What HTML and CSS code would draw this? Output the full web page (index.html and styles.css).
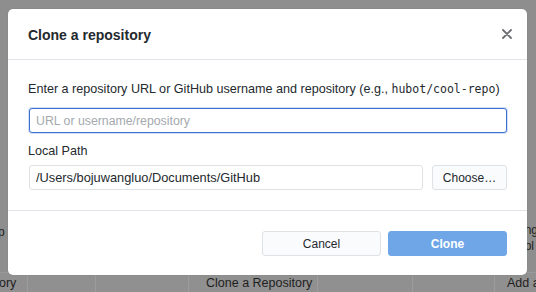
FILE: index.html
```
<!DOCTYPE html>
<html>
<head>
<meta charset="utf-8">
<link rel="stylesheet" href="styles.css">
</head>
<body>
<div class="app">
  <div class="bg-top"></div>
  <div class="bg-mid">
    <span class="bg-left">p</span>
    <span class="bg-right">ng<br>pl</span>
  </div>
  <div class="bg-bar">
    <div class="cell c1">ory</div>
    <div class="cell c2"></div>
    <div class="cell c3"></div>
    <div class="cell c4">Clone a Repository</div>
    <div class="cell c5"></div>
    <div class="cell c6"></div>
    <div class="cell c7">Add a</div>
  </div>
</div>
<div class="dialog">
  <div class="header">
    <h1 class="title">Clone a repository</h1>
    <svg class="close" width="10" height="10" viewBox="0 0 10 10"><path d="M1 1L9 9M9 1L1 9" stroke="#6a6d71" stroke-width="1.8" stroke-linecap="round"/></svg>
  </div>
  <div class="body">
    <p class="label">Enter a repository URL or GitHub username and repository (e.g., <code>hubot/cool-repo</code>)</p>
    <input class="field focus" type="text" placeholder="URL or username/repository">
    <p class="label small-gap">Local Path</p>
    <div class="row">
      <input class="field path" type="text" value="/Users/bojuwangluo/Documents/GitHub">
      <button class="btn choose">Choose…</button>
    </div>
  </div>
  <div class="footer">
    <button class="btn cancel">Cancel</button>
    <button class="btn primary">Clone</button>
  </div>
</div>
</body>
</html>
```
FILE: styles.css
```
html, body {
  margin: 0;
  padding: 0;
}
body {
  width: 536px;
  height: 292px;
  overflow: hidden;
  background: #8e8e8e;
  font-family: "Liberation Sans", Arial, sans-serif;
  position: relative;
}
.app {
  height: 292px;
  display: flex;
  flex-direction: column;
}
.bg-top {
  height: 222px;
}
.bg-mid {
  height: 50px;
  display: flex;
  justify-content: space-between;
  color: #222;
  font-size: 12px;
}
.bg-left {
  margin-left: -2px;
  padding-top: 3px;
}
.bg-right {
  margin-right: -2px;
  line-height: 16px;
  padding-top: 0;
}
.bg-bar {
  flex: 1;
  display: flex;
  background: #909090;
  border-top: 1px solid #999;
}
.cell {
  border-right: 1px solid #9c9c9c;
  color: #1e1e1e;
  font-size: 12.5px;
  padding-top: 3px;
  white-space: nowrap;
  overflow: hidden;
}
.c1 { width: 27px; text-indent: -1px; }
.c2 { width: 67px; }
.c3 { width: 92px; }
.c4 { width: 128px; text-indent: 17px; }
.c5 { width: 94px; }
.c6 { width: 81px; }
.c7 { flex: 1; border-right: none; text-indent: 12px; }

.dialog {
  position: absolute;
  left: 8px;
  top: 9px;
  width: 519px;
  height: 266px;
  background: #fff;
  border-radius: 5px;
  box-shadow: 0 0 1px rgba(0,0,0,0.3);
  display: flex;
  flex-direction: column;
  color: #24292e;
}
.header {
  height: 50px;
  display: flex;
  align-items: center;
  justify-content: space-between;
  padding: 0 15px 0 20px;
  border-bottom: 1px solid #e1e4e8;
}
.title {
  margin: 0;
  font-size: 14px;
  font-weight: bold;
  padding-top: 2px;
}
.close {
  display: block;
}
.body {
  padding: 21px 20px 0 20px;
  height: 129px;
  border-bottom: 1px solid #e1e4e8;
}
.label {
  margin: 0 0 11px 0;
  font-size: 12.6px;
  line-height: 16px;
}
.small-gap {
  margin-top: 10px;
  margin-bottom: 6px;
}
code {
  font-family: "DejaVu Sans Mono", monospace;
  font-size: 11.5px;
}
.field {
  box-sizing: border-box;
  display: block;
  width: 478px;
  height: 25px;
  margin: 0 0 0 1px;
  border: 1px solid #dfe2e5;
  border-radius: 3px;
  padding: 0 6px;
  font-family: "Liberation Sans", Arial, sans-serif;
  font-size: 12.8px;
  color: #24292e;
  background: #fff;
  outline: none;
}
.field::placeholder {
  color: #a5a9ae;
  font-size: 12.3px;
}
.focus {
  border: 1px solid #3a6fd3;
  box-shadow: 0 0 0 1px rgba(80,130,220,0.25);
}
.row {
  display: flex;
  gap: 9px;
}
.path {
  width: 394px;
}
.btn {
  box-sizing: border-box;
  height: 25px;
  border: 1px solid #dfe2e5;
  border-radius: 3px;
  background: #fafbfc;
  font-family: "Liberation Sans", Arial, sans-serif;
  font-size: 12px;
  color: #24292e;
  padding: 0;
}
.choose {
  width: 75px;
}
.footer {
  flex: 1;
  display: flex;
  justify-content: flex-end;
  align-items: flex-start;
  gap: 7px;
  padding: 20px 20px 0 0;
}
.cancel {
  width: 119px;
}
.primary {
  width: 119px;
  background: #6ea6e8;
  border-color: #6ea6e8;
  color: #fff;
  font-weight: bold;
}
```
